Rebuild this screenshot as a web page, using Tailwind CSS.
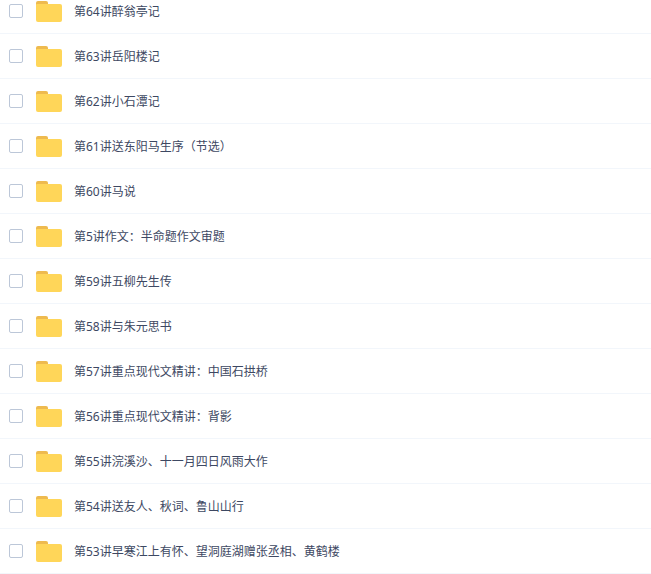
<!DOCTYPE html>
<html lang="zh">
<head>
    <meta charset="UTF-8">
    <title>文件列表</title>
    <script src="https://cdn.jsdelivr.net/npm/@tailwindcss/browser@4"></script>
</head>
<body class="bg-white overflow-hidden h-[574px]">
    <svg class="hidden">
        <symbol id="folder" viewBox="0 0 26 21">
            <path d="M0 2a2 2 0 0 1 2-2h8a2 2 0 0 1 2 2v2H0z" fill="#eeba4f"/>
            <path d="M0 4a1 1 0 0 1 1-1h23a2 2 0 0 1 2 2v14a2 2 0 0 1-2 2H2a2 2 0 0 1-2-2z" fill="#ffd659"/>
        </symbol>
    </svg>
    <ul class="-mt-[11px] text-[12px] text-[#3d4862] font-['Noto_Sans','Noto_Sans_CJK_SC',sans-serif]">
        <li class="flex items-center h-[45px] border-b border-[#f2f6fb]"><span class="ml-[9px] w-[14px] h-[14px] border border-[#bcc7d8] rounded-[2px]"></span><svg class="ml-[13px] mt-[1px] w-[26px] h-[21px]"><use href="#folder"/></svg><span class="ml-[12px] mt-[2px]">第64讲醉翁亭记</span></li>
        <li class="flex items-center h-[45px] border-b border-[#f2f6fb]"><span class="ml-[9px] w-[14px] h-[14px] border border-[#bcc7d8] rounded-[2px]"></span><svg class="ml-[13px] mt-[1px] w-[26px] h-[21px]"><use href="#folder"/></svg><span class="ml-[12px] mt-[2px]">第63讲岳阳楼记</span></li>
        <li class="flex items-center h-[45px] border-b border-[#f2f6fb]"><span class="ml-[9px] w-[14px] h-[14px] border border-[#bcc7d8] rounded-[2px]"></span><svg class="ml-[13px] mt-[1px] w-[26px] h-[21px]"><use href="#folder"/></svg><span class="ml-[12px] mt-[2px]">第62讲小石潭记</span></li>
        <li class="flex items-center h-[45px] border-b border-[#f2f6fb]"><span class="ml-[9px] w-[14px] h-[14px] border border-[#bcc7d8] rounded-[2px]"></span><svg class="ml-[13px] mt-[1px] w-[26px] h-[21px]"><use href="#folder"/></svg><span class="ml-[12px] mt-[2px]">第61讲送东阳马生序（节选）</span></li>
        <li class="flex items-center h-[45px] border-b border-[#f2f6fb]"><span class="ml-[9px] w-[14px] h-[14px] border border-[#bcc7d8] rounded-[2px]"></span><svg class="ml-[13px] mt-[1px] w-[26px] h-[21px]"><use href="#folder"/></svg><span class="ml-[12px] mt-[2px]">第60讲马说</span></li>
        <li class="flex items-center h-[45px] border-b border-[#f2f6fb]"><span class="ml-[9px] w-[14px] h-[14px] border border-[#bcc7d8] rounded-[2px]"></span><svg class="ml-[13px] mt-[1px] w-[26px] h-[21px]"><use href="#folder"/></svg><span class="ml-[12px] mt-[2px]">第5讲作文：半命题作文审题</span></li>
        <li class="flex items-center h-[45px] border-b border-[#f2f6fb]"><span class="ml-[9px] w-[14px] h-[14px] border border-[#bcc7d8] rounded-[2px]"></span><svg class="ml-[13px] mt-[1px] w-[26px] h-[21px]"><use href="#folder"/></svg><span class="ml-[12px] mt-[2px]">第59讲五柳先生传</span></li>
        <li class="flex items-center h-[45px] border-b border-[#f2f6fb]"><span class="ml-[9px] w-[14px] h-[14px] border border-[#bcc7d8] rounded-[2px]"></span><svg class="ml-[13px] mt-[1px] w-[26px] h-[21px]"><use href="#folder"/></svg><span class="ml-[12px] mt-[2px]">第58讲与朱元思书</span></li>
        <li class="flex items-center h-[45px] border-b border-[#f2f6fb]"><span class="ml-[9px] w-[14px] h-[14px] border border-[#bcc7d8] rounded-[2px]"></span><svg class="ml-[13px] mt-[1px] w-[26px] h-[21px]"><use href="#folder"/></svg><span class="ml-[12px] mt-[2px]">第57讲重点现代文精讲：中国石拱桥</span></li>
        <li class="flex items-center h-[45px] border-b border-[#f2f6fb]"><span class="ml-[9px] w-[14px] h-[14px] border border-[#bcc7d8] rounded-[2px]"></span><svg class="ml-[13px] mt-[1px] w-[26px] h-[21px]"><use href="#folder"/></svg><span class="ml-[12px] mt-[2px]">第56讲重点现代文精讲：背影</span></li>
        <li class="flex items-center h-[45px] border-b border-[#f2f6fb]"><span class="ml-[9px] w-[14px] h-[14px] border border-[#bcc7d8] rounded-[2px]"></span><svg class="ml-[13px] mt-[1px] w-[26px] h-[21px]"><use href="#folder"/></svg><span class="ml-[12px] mt-[2px]">第55讲浣溪沙、十一月四日风雨大作</span></li>
        <li class="flex items-center h-[45px] border-b border-[#f2f6fb]"><span class="ml-[9px] w-[14px] h-[14px] border border-[#bcc7d8] rounded-[2px]"></span><svg class="ml-[13px] mt-[1px] w-[26px] h-[21px]"><use href="#folder"/></svg><span class="ml-[12px] mt-[2px]">第54讲送友人、秋词、鲁山山行</span></li>
        <li class="flex items-center h-[45px] border-b border-[#f2f6fb]"><span class="ml-[9px] w-[14px] h-[14px] border border-[#bcc7d8] rounded-[2px]"></span><svg class="ml-[13px] mt-[1px] w-[26px] h-[21px]"><use href="#folder"/></svg><span class="ml-[12px] mt-[2px]">第53讲早寒江上有怀、望洞庭湖赠张丞相、黄鹤楼</span></li>
    </ul>
</body>
</html>
